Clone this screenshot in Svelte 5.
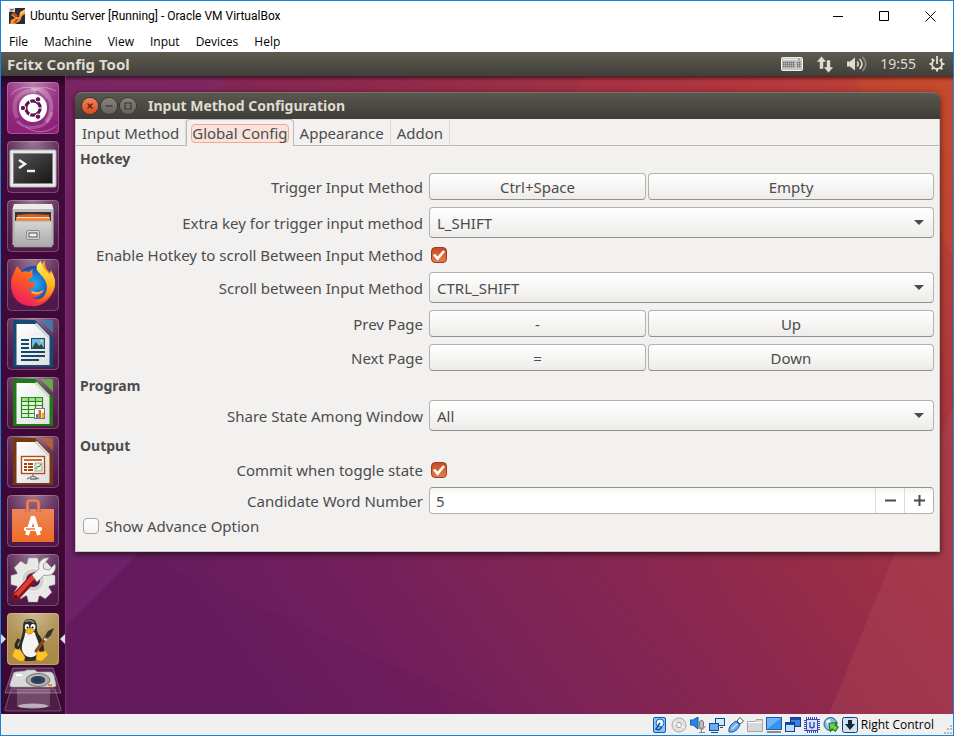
<script>
  const menus = ['File', 'Machine', 'View', 'Input', 'Devices', 'Help'];
  const tabs = ['Input Method', 'Global Config', 'Appearance', 'Addon'];
  const launchers = [
    'Search your computer', 'Terminal', 'Files', 'Firefox Web Browser', 'LibreOffice Writer',
    'LibreOffice Calc', 'LibreOffice Impress', 'Ubuntu Software', 'System Settings', 'Fcitx Config Tool'
  ];
  const devices = [
    'Hard disks', 'Optical drives', 'Audio', 'Network', 'USB', 'Shared folders',
    'Display', 'Recording', 'Processor', 'Mouse integration', 'Keyboard capture'
  ];
  let active = $state('Global Config');
  let extraKey = $state('L_SHIFT');
  let scrollKey = $state('CTRL_SHIFT');
  let share = $state('All');
  let enableScroll = $state(true);
  let commit = $state(true);
  let advance = $state(false);
  let count = $state(5);
  const teeth = [0, 45, 90, 135, 180, 225, 270, 315];
</script>

{#snippet keyRow(label, first, second)}
  <div class="row">
    <span class="label">{label}</span>
    <div class="pair"><button class="btn">{first}</button><button class="btn">{second}</button></div>
  </div>
{/snippet}

{#snippet arrow()}
  <svg class="arrow" width="10" height="5" viewBox="0 0 10 5" aria-hidden="true"><path d="M0 0h10L5 5z" fill="#4a4a4a" /></svg>
{/snippet}

{#snippet tick()}
  <svg class="tick" width="16" height="16" viewBox="0 0 16 16" aria-hidden="true"><path d="M3 7.500l3.600 4.200L13 4" fill="none" stroke="#fff" stroke-width="2.600" /></svg>
{/snippet}

{#snippet page(dark, light)}
  <path d="M7 2h21l18 18v29H6V3z" fill={dark} />
  <path d="M9.500 6h18L42.500 21v26h-33z" fill="url(#paper)" />
  <path d="M27.500 6L42.500 21V18L30 5z" fill="#fff" opacity=".8" />
  <path d="M33 2h12l1 1v12z" fill={light} opacity=".75" />
{/snippet}

{#snippet launcherIcon(i)}
  <svg width="52" height="52" viewBox="0 0 52 52" aria-hidden="true">
    {#if i === 0}
      <rect width="52" height="52" rx="4" fill="#8f2179" />
      <rect width="52" height="52" rx="4" fill="url(#glow)" />
      <g fill="none" stroke="#fff">
        <path d="M10 36C2 17 15 7 29 9" stroke-width="4" opacity=".2" />
        <path d="M24 7c17-4 27 17 15 33" stroke-width="4" opacity=".25" />
        <path d="M45 30C42 47 20 50 10 39" stroke-width="3" opacity=".22" />
        <path d="M4 13c9-12 29-9 36 4M49 9c-9-5-18-4-22 0M50 43c-9 9-24 8-31 2" opacity=".35" />
      </g>
      <circle cx="26" cy="26" r="14" fill="#fff" />
      <circle cx="26" cy="26" r="7.200" fill="none" stroke="#5d1650" stroke-width="3.200" />
      <path d="M26 26l-4-8M26 26h10M26 26l-4 8" stroke="#fff" stroke-width="1.200" />
      <circle cx="26" cy="26" r="5" fill="#fff" />
      <g fill="#5d1650" stroke="#fff" stroke-width="1">
        <circle cx="16" cy="26" r="2.700" /><circle cx="31" cy="17.300" r="2.700" /><circle cx="31" cy="34.700" r="2.700" />
      </g>
    {:else}
      <rect width="52" height="52" rx="4" fill={i === 9 ? '#a98a47' : '#51194a'} />
      <rect width="52" height="52" rx="4" fill="url(#glow)" />
    {/if}
    {#if i === 1}
      <rect x="3" y="9" width="46" height="37" rx="1.500" fill="#e9e9e7" stroke="#b6b6b3" />
      <rect x="6.500" y="12.500" width="39" height="30" fill="url(#screen)" stroke="#888" />
      <path d="M12 19l6 4-6 4" fill="none" stroke="#f2f2f2" stroke-width="2.500" />
      <path d="M20 30h8" stroke="#f2f2f2" stroke-width="2.400" />
    {:else if i === 2}
      <path d="M7 4h38l1.500 5H5.500z" fill="#ececec" />
      <path d="M5.500 9h41v36h-41z" fill="#bdbdbd" />
      <path d="M8 12h36v10H8z" fill="#3c3232" />
      <path d="M10 15l12-1h5l15 1v7H10z" fill="#d45f24" />
      <path d="M9 17h34v5H9z" fill="#f08a42" /><path d="M10 17.500h32" stroke="#ffe3c4" />
      <path d="M7 21h38v26H7z" fill="url(#metal)" stroke="#9a9a9a" stroke-width=".6" />
      <rect x="19.500" y="30.500" width="13" height="9" rx="1.500" fill="#d8d8d8" stroke="#8a8a8a" />
      <rect x="22" y="33" width="8" height="4" fill="#eee" stroke="#555" />
    {:else if i === 3}
      <circle cx="27" cy="25" r="18" fill="url(#globe)" />
      <path d="M4 25C4 17 8 12 10 7l5 6c2-1 5-1 7 0l4-3c-1 4-1 5 0 8-3 1-5 3-4 5 2 1 5 0 7 2-1 3-5 3-7 6 3 4 9 4 15 1-4 6-11 8-15 5 9 7 21 1 21-10 0-9-7-13-9-16-1-4 1-7 4-9-1 6 2 9 5 12l1-3c4 7 6 15 1 24-5 9-13 13-21 12C12 47 4 38 4 25z" fill="url(#fox)" />
      <path d="M34 2c-4 3-5 6-4 9 2 4 9 8 10 16 0 9-5 14-13 16 12 0 21-8 21-19 0-5-2-9-4-11l-1 3c-4-4-8-7-9-14z" fill="url(#flame)" />
      <path d="M24 31c4 3 9 3 13-1-2 5-8 7-12 4z" fill="#ffb52d" />
    {:else if i === 4}
      {@render page('#154b73', '#3b86b8')}
      <g stroke="#16476d" stroke-width="2"><path d="M14 22h8M14 26h8M14 30h8M14 34h24M14 38h24M14 42h18" /></g>
      <rect x="24.500" y="20.500" width="13" height="10" fill="#73b8e0" stroke="#16476d" />
      <path d="M25 30l4-6 3 4 2-2 3 4z" fill="#2b4a3c" /><circle cx="34.500" cy="23" r="1.200" fill="#ffd84c" />
    {:else if i === 5}
      {@render page('#1d7a14', '#69c440')}
      <rect x="14" y="20" width="22" height="20" fill="#e4f4dc" />
      <path d="M14 20h22v4H14z" fill="#a6dd8d" />
      <path d="M14.500 20.500h21v20h-21zM14.500 24.500h21M14.500 28.500h21M14.500 32.500h21M14.500 36.500h21M21.500 20.500v20M28.500 20.500v20" fill="none" stroke="#279019" stroke-width="1.200" />
      <rect x="27.500" y="31.500" width="10" height="10" fill="#fff" stroke="#777" />
      <path d="M29 37h2.500v4H29z" fill="#2e88c9" /><path d="M31.500 33H34v8h-2.500z" fill="#e0641c" /><path d="M34.500 35.500H37V41h-2.500z" fill="#efad30" />
    {:else if i === 6}
      {@render page('#77370f', '#c5692c')}
      <rect x="14.500" y="20.500" width="23" height="17" fill="#fff" stroke="#ad4d13" stroke-width="1.400" />
      <path d="M17 24h18" stroke="#c66a2f" stroke-width="2" />
      <path d="M17 28h3M17 31h3M17 34h3M21 28h5M21 31h5M21 34h5" stroke="#a6440e" stroke-width="1.800" />
      <rect x="28" y="27" width="7" height="8" fill="#e2f1dc" stroke="#999" /><path d="M29 33l2-3 1 1 2-3" fill="none" stroke="#2d9332" />
      <path d="M26 38v3M20 43l6-3 6 3M23 43h7" fill="none" stroke="#777" stroke-width="1.300" />
    {:else if i === 7}
      <path d="M5 14h42v33H5z" fill="url(#bag)" />
      <path d="M20.500 17V8q0-2.500 2.500-2.500h6q2.500 0 2.500 2.500v9" fill="none" stroke="#b8533a" stroke-width="4" />
      <path d="M20.500 17V8q0-2.500 2.500-2.500h6q2.500 0 2.500 2.500v9" fill="none" stroke="#e8835f" stroke-width="2.600" />
      <path d="M20 40l5.500-17h1L32 40" fill="none" stroke="#fff" stroke-width="4" />
      <rect x="17" y="32" width="18" height="4" rx="1.500" fill="#fff" /><path d="M19 34h9" stroke="#e96a2b" stroke-width="1.400" />
    {:else if i === 8}
      <g fill="#e8e8e6" stroke="#aaa" stroke-width=".5">
        {#each teeth as angle}<path d="M21.500 4h9l2 8h-13z" transform={`rotate(${angle} 26 26)`} />{/each}
      </g>
      <circle cx="26" cy="26" r="17" fill="#e8e8e6" /><circle cx="26" cy="26" r="11.500" fill="#d0d0cd" stroke="#f7f7f7" />
      <circle cx="26" cy="26" r="7" fill="#531d4b" />
      <path d="M9.500 42L28 22" stroke="#8c1111" stroke-width="8" stroke-linecap="round" />
      <path d="M9.500 41L27 22" stroke="#dc3b37" stroke-width="4.500" stroke-linecap="round" />
      <circle cx="9" cy="42.500" r="1.500" fill="#4b0a0a" />
      <path d="M25 21l7-6c-2-7 4-12 10-11l-6 7 1 4 5 1 6-6c2 8-4 13-11 11l-7 7z" fill="#f1f1ef" stroke="#8a8a8a" stroke-width=".8" />
    {:else if i === 9}
      <path d="M16 16c0-7 1-10 7-10s7 4 7 11c1 6 7 11 7 19s-3 12-14 12-14-2-12-12c1-7 5-13 5-20z" fill="#2b2b2a" />
      <path d="M18 9c2-2 7-2 9 1" fill="none" stroke="#888" stroke-width="1.600" />
      <path d="M18 20c2-2 8-2 10 0 1 5 5 10 4 17-2 9-14 10-17 0-1-7 3-12 3-17z" fill="#f4f4f2" />
      <ellipse cx="20" cy="14" rx="2.200" ry="3" fill="#fff" /><ellipse cx="26" cy="14" rx="2.500" ry="3" fill="#fff" />
      <circle cx="20.500" cy="14.500" r="1" /><circle cx="25.500" cy="14.500" r="1" />
      <path d="M18 18l5-3 5 2-4 4h-3z" fill="#f5b51c" stroke="#b77a0a" stroke-width=".5" />
      <path d="M5 43l3-7 4-1 6 9-1 4-5 0zM29 47l1-9 4 1 5-1 2 4-6 6z" fill="#ffc32c" stroke="#d48b11" stroke-width=".6" />
      <path d="M12 26c-4 6-4 9 0 9M31 23c4 5 4 9 1 11" fill="none" stroke="#292928" stroke-width="3" />
      <path d="M29 38L40 23" stroke="#8a4a19" stroke-width="3" stroke-linecap="round" />
      <path d="M38 23l3-5 6-3-3 7-3 3z" fill="#343434" /><path d="M37 26l3 1" stroke="#ddd" stroke-width="2" />
    {/if}
    <rect x=".5" y=".5" width="51" height="51" rx="4" fill="none" stroke="#fff" stroke-opacity=".22" />
  </svg>
{/snippet}

{#snippet deviceIcon(i)}
  <svg width="16" height="16" viewBox="0 0 16 16" aria-hidden="true">
    {#if i === 0}
      <rect x="1.500" y=".5" width="12" height="15" rx="1.500" fill="#8fc4f7" stroke="#1259ad" /><circle cx="8" cy="6" r="4" fill="#e9f5ff" stroke="#1765bd" /><path d="M8 6l-4 6 3 1 3-3" fill="none" stroke="#0e519e" stroke-width="1.500" />
    {:else if i === 1}
      <circle cx="8" cy="8" r="7" fill="#e2e2e2" stroke="#aaa" /><circle cx="8" cy="8" r="2.500" fill="#fff" stroke="#999" /><path d="M3 6l3 1M10 9l4 2" stroke="#fff" />
    {:else if i === 2}
      <path d="M0 3h3l5-3v12L3 8H0z" fill="#2f82df" stroke="#1057a8" /><rect x="9.500" y="3.500" width="4" height="8" rx="2" fill="#bbb" stroke="#777" /><path d="M7.500 9q4 7 8 0M11.500 12v3M9 15.500h6" fill="none" stroke="#888" />
    {:else if i === 3}
      <rect x="6.500" y="1.500" width="9" height="7" fill="#cfe6fd" stroke="#174b91" /><rect x=".5" y="6.500" width="9" height="7" fill="#62abf5" stroke="#174b91" /><path d="M2 15.500h7M11 10.500h3" stroke="#345" />
    {:else if i === 4}
      <path d="M9 4l3-3.500L15.500 4 12 7z" fill="#fff" stroke="#456" /><path d="M1 15c-1-6 4-9 7-11l4 4c-2 4-5 8-11 7z" fill="#67adf1" stroke="#125aa8" /><path d="M4 12l5-5" stroke="#d6edff" stroke-width="1.500" />
    {:else if i === 5}
      <path d="M.5 14.500v-10h7l2-2h6v12z" fill="#d8d8d8" stroke="#a5a5a5" /><path d="M1 5.500h14" stroke="#fff" />
    {:else if i === 6}
      <rect x=".5" y=".5" width="15" height="12" fill="#3596f2" stroke="#1e5ba3" /><path d="M1 1h14L1 12z" fill="#8cc9ff" opacity=".6" /><path d="M1 15h14" stroke="#888" stroke-width="2" />
    {:else if i === 7}
      <rect x="5.500" y=".5" width="10" height="9" fill="#3f80de" stroke="#173d96" /><rect x=".5" y="5.500" width="9" height="9" fill="#b9dfff" stroke="#173d96" /><path d="M6 1h9v2H6zM1 6h8v2H1z" fill="#174db0" />
    {:else if i === 8}
      <rect x="2" y="2" width="12" height="12" fill="none" stroke="#384ab5" stroke-width="4" stroke-dasharray="1 1" /><rect x="2.500" y="2.500" width="11" height="11" fill="#dbe2ff" stroke="#384ab5" /><path d="M6 5v5l2 1 2-1V5" fill="none" stroke="#384ab5" stroke-width="1.400" />
    {:else if i === 9}
      <circle cx="7.500" cy="7" r="6.500" fill="#8bbce9" stroke="#255a99" /><path d="M3 4l4-2 1 4-3 3z" fill="#e7f4ff" /><path d="M5 9l6-5v3h4v5h-4v3z" transform="rotate(35 10 9)" fill="#6ece48" stroke="#16721a" />
    {:else}
      <rect x=".5" y=".5" width="15" height="15" rx="2" fill="#cfe3f5" stroke="#1c3f67" /><path d="M6 3h4v4h3l-5 6-5-6h3z" fill="#182634" />
    {/if}
  </svg>
{/snippet}

<div class="vbox">
  <header class="titlebar">
    <svg width="16" height="16" viewBox="0 0 16 16" aria-hidden="true">
      <rect width="16" height="16" fill="#292b3b" /><path d="M3 6l4 3h3l1-5 5-3v5l-3 2-2 5-5 3H1l1-4 4-2-4-3z" fill="#f29938" /><path d="M3 5l4 4 2-1-4-4zM7 11l-3 4h3l3-4z" fill="#d94819" /><path d="M10 9l2-5 4-2v2l-3 1z" fill="#ffd36b" /><rect width="6" height="4" fill="#ddd" /><path d="M1 1.500h4M1 3h3" stroke="#777" />
    </svg>
    <h1>Ubuntu Server [Running] - Oracle VM VirtualBox</h1>
    <div class="caption">
      <button aria-label="Minimize"><svg width="11" height="11" viewBox="0 0 11 11"><path d="M0 5.500h10" stroke="#000" /></svg></button>
      <button aria-label="Maximize"><svg width="11" height="11" viewBox="0 0 11 11"><path d="M.5.5h9v9h-9z" fill="none" stroke="#000" /></svg></button>
      <button aria-label="Close"><svg width="11" height="11" viewBox="0 0 11 11"><path d="M.5.5l10 10M10.500.5l-10 10" stroke="#000" /></svg></button>
    </div>
  </header>
  <nav class="menubar">
    {#each menus as menu}<button>{menu}</button>{/each}
  </nav>

  <main class="screen">
    <div class="panel">
      <strong>Fcitx Config Tool</strong>
      <div class="indicators">
        <svg width="22" height="14" viewBox="0 0 22 14" aria-label="Keyboard"><rect x=".5" y=".5" width="21" height="13" rx="1" fill="#c4c4c0" stroke="#f1f1ef" /><path d="M2 2.500h18" stroke="#eee" /><path d="M2 5.500h12M2 7.500h12M2 9.500h12M16 5.500h4M16 7.500h4M16 9.500h4" stroke="#6a6a68" stroke-width="1.600" stroke-dasharray="1.400 .6" /><path d="M17 2.500h2" stroke="#78a050" /></svg>
        <svg width="18" height="17" viewBox="0 0 18 17" aria-label="Network"><path d="M5.500 0l5 6h-3v7h-4V6h-3zM12.500 17l-5-6h3V4h4v7h3z" fill="#dfdbd2" stroke="#45443e" stroke-width=".5" /></svg>
        <svg width="20" height="16" viewBox="0 0 20 16" aria-label="Sound"><path d="M0 5.500h3l5-4v13l-5-4H0z" fill="#dfdbd2" /><g fill="none" stroke="#dfdbd2" stroke-width="1.600"><path d="M10 5.500q2.500 2.500 0 5" /><path d="M12.500 3q5 5 0 10" /><path d="M15.500 1q6.500 7 0 14" opacity=".45" /></g></svg>
        <time>19:55</time>
        <svg width="16" height="16" viewBox="0 0 16 16" aria-label="Session"><g stroke="#dfdbd2" stroke-width="2">{#each teeth.slice(1) as angle}<path d="M8 .5v3" transform={`rotate(${angle} 8 8)`} />{/each}</g><path d="M5.300 3.800a5 5 0 1 0 5.400 0M8 0v8" fill="none" stroke="#dfdbd2" stroke-width="1.800" /></svg>
      </div>
    </div>

    <div class="workspace">
      <svg class="wallpaper" viewBox="0 0 888 638" preserveAspectRatio="none" aria-hidden="true">
        <defs>
          <linearGradient id="wall" gradientUnits="userSpaceOnUse" x1="150" y1="580" x2="890" y2="40"><stop offset="0" stop-color="#651c5e" /><stop offset=".2" stop-color="#75205b" /><stop offset=".5" stop-color="#8e294d" /><stop offset=".78" stop-color="#a7353e" /><stop offset="1" stop-color="#c1462f" /></linearGradient>
          <radialGradient id="glow" cx=".5" cy="0" r=".9"><stop offset="0" stop-color="#fff" stop-opacity=".42" /><stop offset=".6" stop-color="#fff" stop-opacity=".08" /><stop offset="1" stop-color="#fff" stop-opacity="0" /></radialGradient>
          <linearGradient id="paper" x2="1" y2="1"><stop stop-color="#fff" /><stop offset="1" stop-color="#dedede" /></linearGradient>
          <linearGradient id="screen" x2="1" y2="1"><stop stop-color="#555" /><stop offset="1" stop-color="#161616" /></linearGradient>
          <linearGradient id="metal" x2="0" y2="1"><stop stop-color="#d5d5d3" /><stop offset="1" stop-color="#a9a9a7" /></linearGradient>
          <linearGradient id="bag" x2="0" y2="1"><stop stop-color="#eb875b" /><stop offset="1" stop-color="#ef6b24" /></linearGradient>
          <radialGradient id="globe"><stop stop-color="#23b4f4" /><stop offset="1" stop-color="#1746b0" /></radialGradient>
          <linearGradient id="fox" x1=".8" y1="0" x2=".2" y2="1"><stop stop-color="#ffb52b" /><stop offset=".5" stop-color="#ff5b24" /><stop offset="1" stop-color="#ed1665" /></linearGradient>
          <linearGradient id="flame" x2="0" y2="1"><stop stop-color="#fff45a" /><stop offset=".6" stop-color="#ffb31d" /><stop offset="1" stop-color="#ff5a22" /></linearGradient>
          <linearGradient id="bar" x2="0" y2="1"><stop stop-color="#000" stop-opacity=".5" /><stop offset="1" stop-color="#000" stop-opacity="0" /></linearGradient>
        </defs>
        <rect width="888" height="638" fill="url(#wall)" />
        <path d="M0 0h160L72 478 0 550z" fill="#7c2b74" opacity=".4" />
        <path d="M72 478l368 160H0v-88z" fill="#561657" opacity=".1" />
        <path d="M520 0L501 30h270L790 0z" fill="#c4344b" opacity=".2" />
        <path d="M888 330l-59 148-65 160h124z" fill="#b34857" opacity=".35" />
        <path d="M789 0h99v180z" fill="#d25227" opacity=".25" />
        <rect width="888" height="5" fill="url(#bar)" />
      </svg>

      <aside class="launcher" aria-label="Launcher">
        {#each launchers as name, i}
          <button class={{ tile: true, running: i === 9 }} aria-label={name}>{@render launcherIcon(i)}</button>
        {/each}
        <button class="tile folded" aria-label="Shotwell">
          <svg width="60" height="46" viewBox="0 0 60 46" aria-hidden="true">
            <path d="M10 1h40l8 25H2z" fill="#fff" fill-opacity=".13" stroke="#fff" stroke-opacity=".3" />
            <path d="M8 22h44l6 20q1 2-2 2H4q-3 0-2-2z" fill="#fff" fill-opacity=".09" stroke="#fff" stroke-opacity=".25" />
            <path d="M14 22h33v18H14z" fill="#fff" opacity=".2" /><ellipse cx="30" cy="39" rx="15" ry="2.500" fill="#ddd" opacity=".7" />
            <path d="M13 5l9-1 2-1h8l2 2h13q3 0 4 4l2 9q0 2-3 2H9q-3 0-2-3l3-9q0-3 3-3z" fill="#d9d9d9" stroke="#aaa" stroke-width=".7" />
            <ellipse cx="35" cy="13" rx="12" ry="6.500" fill="#a9a9a9" stroke="#777" /><ellipse cx="35" cy="13" rx="8" ry="4.700" fill="#444" stroke="#ccc" /><ellipse cx="34.500" cy="13" rx="4" ry="2.500" fill="#183c73" />
            <path d="M45 18h4" stroke="#ed8b2b" stroke-width="2" /><path d="M13 8h6" stroke="#fff" stroke-width="2" />
          </svg>
        </button>
      </aside>

      <section class="window">
        <div class="window-title">
          <button class="dot close" aria-label="Close window"><svg width="16" height="16" viewBox="0 0 16 16"><path d="M5.500 5.500l5 5M10.500 5.500l-5 5" stroke="#4c2013" stroke-width="1.200" /></svg></button>
          <button class="dot" aria-label="Minimize window"><svg width="16" height="16" viewBox="0 0 16 16"><path d="M4.500 8h7" stroke="#3a3935" stroke-width="1.200" /></svg></button>
          <button class="dot" aria-label="Maximize window"><svg width="16" height="16" viewBox="0 0 16 16"><path d="M5 5h6v6H5z" fill="none" stroke="#3a3935" stroke-width="1.200" /></svg></button>
          <h2>Input Method Configuration</h2>
        </div>
        <div class="tabs" role="tablist">
          {#each tabs as tab}
            <button role="tab" aria-selected={tab === active} class={{ tab: true, active: tab === active }} onclick={() => (active = tab)}><span>{tab}</span></button>
          {/each}
          <div class="tab-fill"></div>
        </div>
        <div class="content">
          <h3>Hotkey</h3>
          <div class="rows">
            {@render keyRow('Trigger Input Method', 'Ctrl+Space', 'Empty')}
            <div class="row">
              <label for="extra">Extra key for trigger input method</label>
              <div class="combo"><select id="extra" bind:value={extraKey}><option>L_SHIFT</option><option>R_SHIFT</option></select>{@render arrow()}</div>
            </div>
            <div class="row">
              <label for="enable">Enable Hotkey to scroll Between Input Method</label>
              <div class="check"><input id="enable" type="checkbox" bind:checked={enableScroll} />{#if enableScroll}{@render tick()}{/if}</div>
            </div>
            <div class="row">
              <label for="scroll">Scroll between Input Method</label>
              <div class="combo"><select id="scroll" bind:value={scrollKey}><option>CTRL_SHIFT</option><option>ALT_SHIFT</option></select>{@render arrow()}</div>
            </div>
            {@render keyRow('Prev Page', '-', 'Up')}
            {@render keyRow('Next Page', '=', 'Down')}
          </div>
          <h3>Program</h3>
          <div class="rows">
            <div class="row">
              <label for="share">Share State Among Window</label>
              <div class="combo"><select id="share" bind:value={share}><option>All</option><option>No</option></select>{@render arrow()}</div>
            </div>
          </div>
          <h3>Output</h3>
          <div class="rows">
            <div class="row">
              <label for="commit">Commit when toggle state</label>
              <div class="check"><input id="commit" type="checkbox" bind:checked={commit} />{#if commit}{@render tick()}{/if}</div>
            </div>
            <div class="row">
              <label for="count">Candidate Word Number</label>
              <div class="spin">
                <input id="count" type="number" bind:value={count} />
                <button aria-label="Decrease" onclick={() => count--}><svg width="11" height="11" viewBox="0 0 11 11"><path d="M0 5.500h11" stroke="#4a4a4a" stroke-width="2" /></svg></button>
                <button aria-label="Increase" onclick={() => count++}><svg width="11" height="11" viewBox="0 0 11 11"><path d="M0 5.500h11M5.500 0v11" stroke="#4a4a4a" stroke-width="2" /></svg></button>
              </div>
            </div>
          </div>
          <div class="advance">
            <div class="check"><input id="advance" type="checkbox" bind:checked={advance} />{#if advance}{@render tick()}{/if}</div>
            <label for="advance">Show Advance Option</label>
          </div>
        </div>
      </section>
    </div>
  </main>

  <footer class="status">
    {#each devices as device, i}<span class="device" title={device}>{@render deviceIcon(i)}</span>{/each}
    <span class="host">Right Control</span>
    <svg class="grip" width="10" height="10" viewBox="0 0 10 10" aria-hidden="true"><path d="M7 0h2v2H7zM4 3h2v2H4zM7 3h2v2H7zM1 7h2v2H1zM4 7h2v2H4zM7 7h2v2H7z" fill="#bbb" /></svg>
  </footer>
</div>

<style>
  .vbox { box-sizing: border-box; min-height: 100vh; display: flex; flex-direction: column; border: 1px solid #1883d7; background: #fff; color: #000; font: 12px/16px "Open Sans", "Noto Sans", sans-serif; }
  .vbox * { box-sizing: border-box; }
  button { font: inherit; color: inherit; padding: 0; border: 0; background: none; }
  svg { display: block; flex: none; }
  h1, h2, h3 { margin: 0; }
  .titlebar { display: flex; align-items: center; height: 30px; padding-left: 8px; gap: 5px; }
  h1 { flex: 1; font: 12px/16px Roboto, "Open Sans", sans-serif; white-space: nowrap; }
  .caption { display: flex; }
  .caption button { width: 46px; height: 28px; display: grid; place-items: center; }
  .menubar { display: flex; gap: 16px; height: 21px; padding: 0 8px; align-items: center; }
  .screen { flex: 1; display: flex; flex-direction: column; font: 15px/20px "Noto Sans", "Open Sans", sans-serif; color: #4c4c4c; }
  .panel { height: 24px; display: flex; justify-content: space-between; align-items: center; padding: 0 8px 0 6px; background: linear-gradient(#5c5a50, #413f3a); color: #dfdbd2; }
  .indicators { display: flex; align-items: center; gap: 13px; font-size: 14px; }
  .workspace { flex: 1; position: relative; display: flex; align-items: stretch; background: #651d5e; }
  .wallpaper { position: absolute; left: 65px; top: 0; width: calc(100% - 65px); height: 100%; }
  .launcher { position: relative; width: 65px; display: flex; flex-direction: column; gap: 7px; padding: 6px 0 0 6px; border-right: 1px solid #74346c; background: linear-gradient(#26061f, #41093a 12px, #3d0735); }
  .tile { position: relative; width: 52px; height: 52px; flex: none; }
  .running::before, .running::after { content: ""; position: absolute; top: 21px; border: 5px solid transparent; }
  .running::before { left: -6px; border-left-color: #ddd; border-right: 0; }
  .running::after { right: -6px; border-right-color: #ddd; border-left: 0; }
  .folded { width: 60px; height: 46px; margin: -5px 0 0 -4px; }
  .window { position: relative; flex: 1; align-self: flex-start; margin: 16px 13px 16px 9px; border-radius: 7px 7px 0 0; box-shadow: 0 2px 6px #0009; }
  .window-title { display: flex; align-items: center; gap: 3px; height: 27px; padding-left: 7px; border-radius: 7px 7px 0 0; border-top: 1px solid #76746b; background: linear-gradient(#59574e, #3e3d38); color: #dfdbd2; }
  .dot { width: 16px; height: 16px; border-radius: 50%; background: linear-gradient(#85837b, #65635c); box-shadow: 0 0 0 1px #393833; }
  .dot.close { background: linear-gradient(#f5835f, #df4a19); }
  h2 { font-size: 14px; line-height: 20px; margin-left: 9px; }
  .tabs { display: flex; height: 27px; background: #f2f1f0; border-left: 1px solid #c8c6c3; border-right: 1px solid #c8c6c3; }
  .tab { padding: 2px 6px 0; border-bottom: 1px solid #bcb9b5; border-right: 1px solid #dddbd8; white-space: nowrap; }
  .tab.active { padding: 0 4px; border: 1px solid #bcb9b5; border-bottom: 0; border-radius: 4px 4px 0 0; }
  .tab.active span { display: block; line-height: 17px; border: 1px solid #f0aa90; border-radius: 4px; background: #f7e3db; }
  .tab-fill { flex: 1; border-bottom: 1px solid #bcb9b5; }
  .content { padding: 0 5px 15px 4px; border: 1px solid #c8c6c3; border-top: 0; background: #f2f1f0; }
  h3 { font-size: 14px; line-height: 20px; padding: 5px 0 4px; }
  .content h3:first-child { padding-top: 3px; }
  .rows { display: flex; flex-direction: column; gap: 7px; }
  .row { display: grid; grid-template-columns: 343fr 505fr; gap: 6px; align-items: center; }
  .row > label, .label { text-align: right; white-space: nowrap; }
  .pair { display: grid; grid-template-columns: 217fr 286fr; gap: 2px; }
  .btn, select, .spin { border: 1px solid #b4b2af; border-bottom-color: #92908d; border-radius: 4px; background: linear-gradient(#fff, #edecea); }
  .btn { height: 27px; }
  .combo, .check { position: relative; }
  select { display: block; appearance: none; width: 100%; height: 31px; padding: 0 24px 0 7px; font: inherit; color: inherit; }
  .arrow { position: absolute; right: 10px; top: 13px; pointer-events: none; }
  .check { height: 20px; padding: 2px; }
  .check input { appearance: none; display: block; width: 16px; height: 16px; margin: 0; border: 1px solid #a9a6a3; border-radius: 4px; background: linear-gradient(#fff, #f5f4f3); }
  .check input:checked { border-color: #973f20; background: linear-gradient(#cc4a20, #e67c50); }
  .tick { position: absolute; left: 2px; top: 2px; pointer-events: none; }
  .spin { display: flex; height: 27px; border-color: #92908d #b4b2af #b4b2af; background: linear-gradient(#f4f4f3, #fff 8px); }
  .spin input { appearance: textfield; flex: 1; min-width: 0; padding: 0 6px; border: 0; background: none; font: inherit; color: inherit; }
  .spin input::-webkit-inner-spin-button { appearance: none; margin: 0; }
  .spin button { width: 29px; display: grid; place-items: center; border-left: 1px solid #dddbd9; }
  .advance { display: flex; align-items: center; gap: 4px; padding: 2px 0 0 1px; }
  .status { height: 21px; display: flex; justify-content: flex-end; align-items: center; gap: 3px; background: #f0f0f0; }
  .host { white-space: nowrap; }
  .grip { align-self: flex-end; margin-left: 6px; }
</style>
